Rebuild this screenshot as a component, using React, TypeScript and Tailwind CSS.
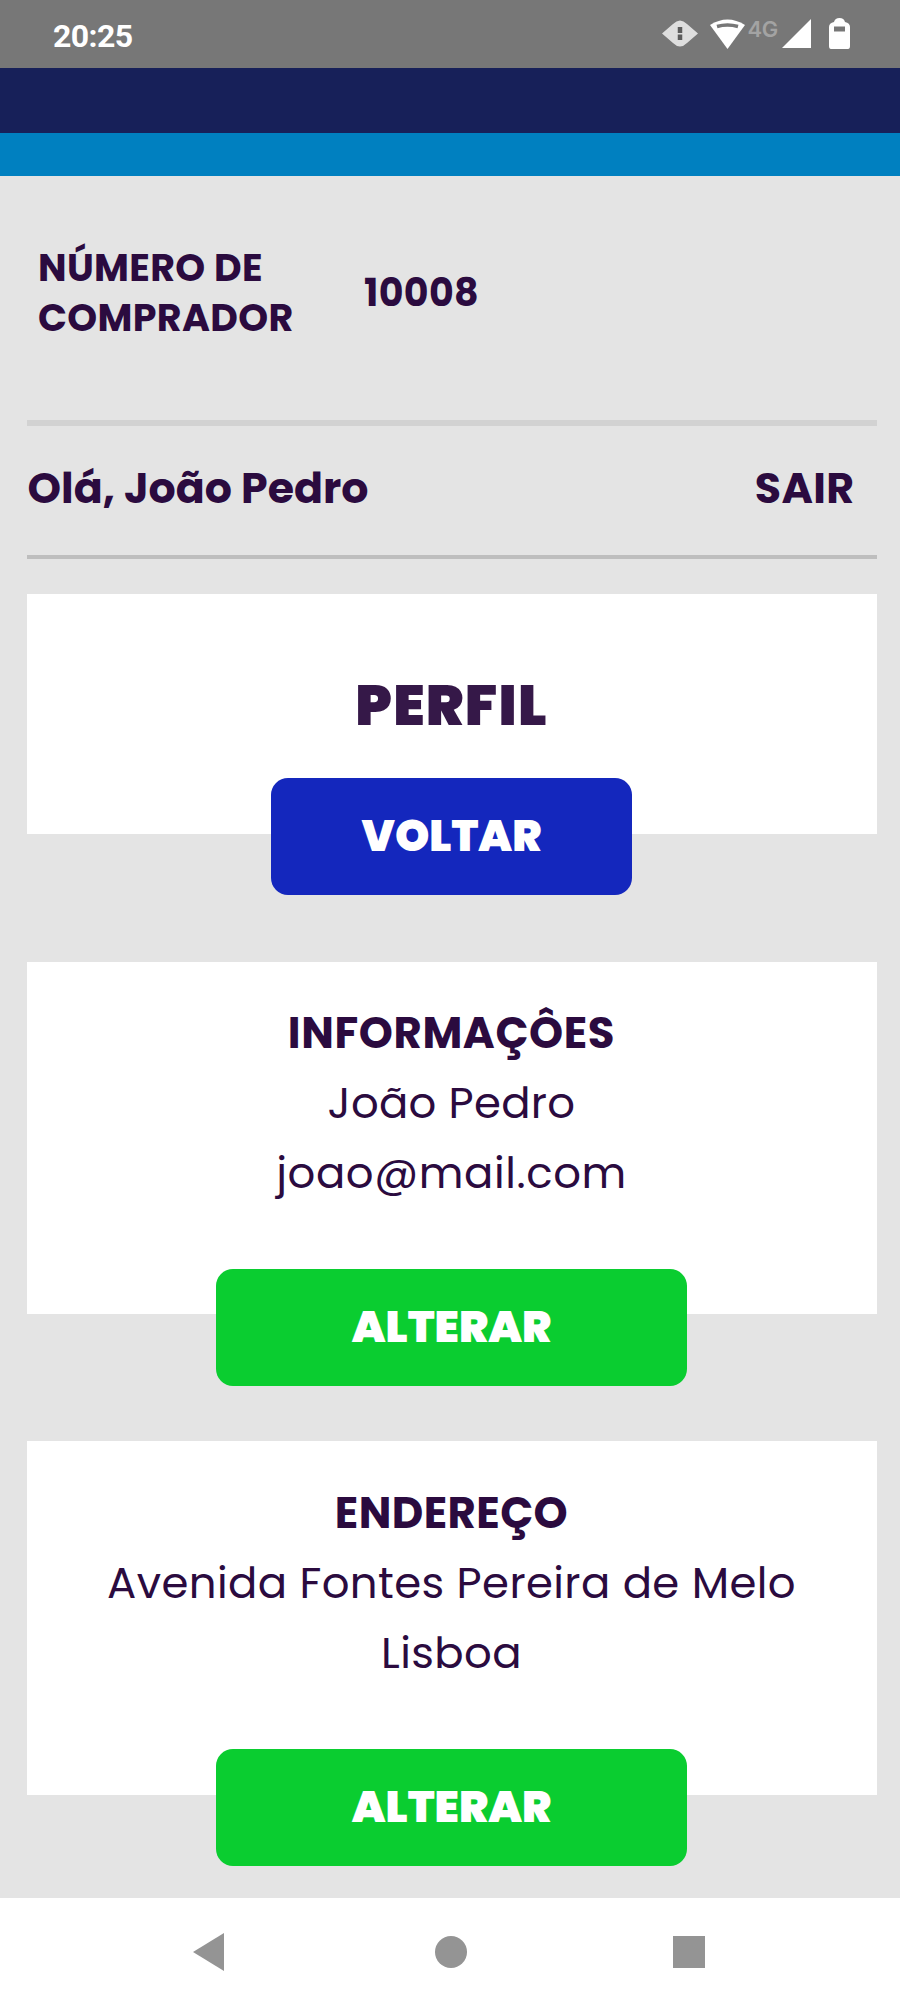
interface CardProps {
  className: string
  children: React.ReactNode
}

export default function App() {
  return (
    <main className="w-full h-[2003px] flex flex-col bg-[#e4e4e4] text-[#2b0b3f] font-['Poppins','Inter',sans-serif] whitespace-nowrap overflow-hidden">
      <StatusBar />
      <div className="h-[65px] shrink-0 bg-[#172059]" />
      <div className="h-[43px] shrink-0 bg-[#0080c0]" />

      <div className="flex-1 pl-[26.5px] pr-[23.5px]">
        <section className="h-[244px] pt-[66.5px] pl-[11.5px] flex items-start text-[38px] font-bold tracking-[0.35px]">
          <div className="w-[326px] leading-[50px]">
            <p>NÚMERO DE</p>
            <p>COMPRADOR</p>
          </div>
          <p className="leading-[100px]">10008</p>
        </section>

        <section className="h-[139px] pb-[5px] pr-[22px] border-t-[6px] border-b-[4px] border-t-[#d2d2d2] border-b-[#bebebe] flex items-center justify-between text-[42.7px] font-bold">
          <p className="pl-[1px]">Olá, João Pedro</p>
          <button className="tracking-[0.4px]">SAIR</button>
        </section>

        <Card className="mt-[35px] h-[240px] pt-[81.5px]">
          <h1 className="h-[60px] leading-[60px] text-[56.5px] font-black tracking-[1.2px] text-[#351848]">PERFIL</h1>
          <button className="mt-[42.5px] w-[361px] h-[117px] shrink-0 rounded-[17px] bg-[#1427bd] text-white text-[43.7px] font-black pb-[1px]">
            VOLTAR
          </button>
        </Card>

        <Card className="mt-[128px] h-[352px] pt-[35.5px]">
          <h2 className="font-bold tracking-[0.6px]">INFORMAÇÔES</h2>
          <p className="tracking-[0.3px]">João Pedro</p>
          <p className="tracking-[0.6px]">joao@mail.com</p>
          <EditButton />
        </Card>

        <Card className="mt-[127px] h-[354px] pt-[36.5px]">
          <h2 className="font-bold tracking-[0.4px]">ENDEREÇO</h2>
          <p className="tracking-[0.4px]">Avenida Fontes Pereira de Melo</p>
          <p className="tracking-[0.4px]">Lisboa</p>
          <EditButton />
        </Card>
      </div>

      <NavBar />
    </main>
  )
}

function Card({ className, children }: CardProps) {
  return (
    <section className={`flex flex-col items-center bg-white text-[43.4px] leading-[70px] ${className}`}>
      {children}
    </section>
  )
}

// Hangs over the bottom edge of its card
function EditButton() {
  return (
    <button className="mt-[61.5px] w-[471px] h-[117px] shrink-0 rounded-[17px] bg-[#0acd30] text-white text-[43.7px] font-black pb-[1.5px]">
      ALTERAR
    </button>
  )
}

function StatusBar() {
  return (
    <header className="h-[68px] shrink-0 pl-[53px] pr-[50.5px] flex items-start justify-between bg-[#777777] text-white">
      <span className="pt-[17px] font-['Roboto',sans-serif] text-[32px] leading-[38px] font-bold tracking-[-0.6px]">20:25</span>
      <div className="pt-[18px] flex items-start">
        {/* vibrate */}
        <svg className="mt-[1px]" width="36" height="29" viewBox="0 0 36 29" fill="#dedede">
          <path d="M0 14.500 11 5q7-7 14 0l11 9.500L25 24q-7 7-14 0Z" />
          <path d="M18 8v13" stroke="#5c5c5c" strokeWidth="4.5" strokeDasharray="6 1.500" />
        </svg>
        {/* wifi */}
        <svg className="ml-[12px]" width="35" height="31" viewBox="0 0 35 31">
          <path d="M0 7q17.500-11 35 0L17.500 31Z" fill="#fff" />
          <path d="M7 8.500q10.500-3 21 0" fill="none" stroke="#777" strokeWidth="3.5" />
        </svg>
        <span className="ml-[3px] w-[30px] font-['Inter',sans-serif] text-[22px] leading-[22px] font-semibold tracking-[-0.5px] text-[#a3a3a3]">4G</span>
        {/* signal */}
        <svg className="ml-[4px]" width="29" height="30" viewBox="0 0 29 30">
          <path d="M29 1v29H0Z" fill="#fff" />
        </svg>
        {/* battery */}
        <svg className="ml-[18px]" width="21" height="31" viewBox="0 0 21 31">
          <path d="M5 4Q6 0 10.500 0T16 4q5 1 5 5v19q0 3-2 3H2q-2 0-2-3V9q0-4 5-5Z" fill="#fff" />
          <path d="M5 8.500h11v5H5Z" fill="#777" />
        </svg>
      </div>
    </header>
  )
}

function NavBar() {
  return (
    <nav className="h-[105px] shrink-0 pl-[193px] pr-[195px] pt-[2px] flex items-center justify-between bg-white">
      <svg width="31" height="38" viewBox="0 0 31 38">
        <path d="M31 0v38L0 19Z" fill="#949494" />
      </svg>
      <div className="ml-[4px] size-[32px] rounded-full bg-[#949494]" />
      <div className="size-[32px] bg-[#949494]" />
    </nav>
  )
}
